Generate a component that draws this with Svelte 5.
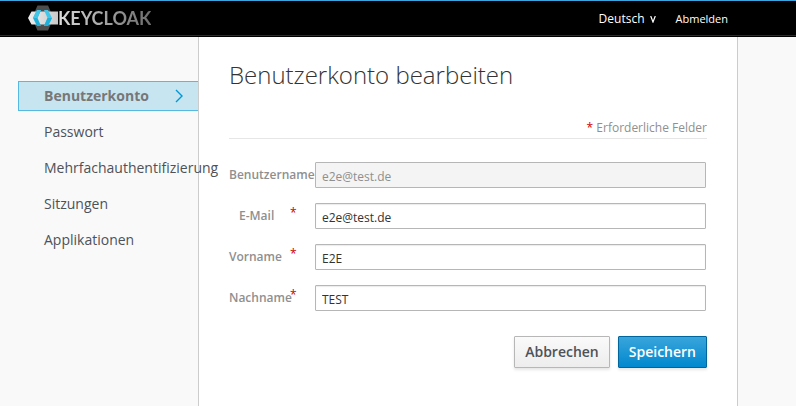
<script>
  const nav = ['Benutzerkonto', 'Passwort', 'Mehrfachauthentifizierung', 'Sitzungen', 'Applikationen'];
  const fields = [
    { id: 'username', label: 'Benutzername', value: 'e2e@test.de', disabled: true },
    { id: 'email', label: 'E-Mail', value: 'e2e@test.de', required: true, indent: true },
    { id: 'firstName', label: 'Vorname', value: 'E2E', required: true },
    { id: 'lastName', label: 'Nachname', value: 'TEST', required: true }
  ];
</script>

<div class="page">
  <header>
    <a class="logo" href="#home">
      <svg width="30" height="26" viewBox="0 0 30 26" aria-hidden="true">
        <defs>
          <linearGradient id="band" x1="0" x2="1" y1="0" y2="0">
            <stop offset="0" stop-color="#eeeeee" />
            <stop offset="1" stop-color="#c8c8c8" />
          </linearGradient>
        </defs>
        <path d="M9.500 0.500h10.500l5.500 12.500l-5.500 12.500h-10.500L4 13z" fill="#4d4d4d" />
        <path d="M3.500 6.500h26.500V19.500H3.500L0 13z" fill="url(#band)" />
        <path d="M9 5h4L9.500 13l3.500 8h-4L5 13z" fill="#1fb0da" />
        <path d="M9 5h4L9.500 13H5z" fill="#42c6e8" />
        <path d="M16 5h4L24 13l-4 8H16l3.500-8z" fill="#42c6e8" />
        <path d="M19.500 13h4.500l-4 8H16z" fill="#1fb0da" />
      </svg>
      <span>KEYCLOAK</span>
    </a>
    <nav class="tools">
      <a class="lang" href="#locale">Deutsch
        <svg width="6" height="7" viewBox="0 0 6 7" aria-hidden="true"><path d="M.7 0L3 6L5.300 0" fill="none" stroke="#fff" stroke-width="1.200" /></svg>
      </a>
      <a href="#logout">Abmelden</a>
    </nav>
  </header>

  <div class="body">
    <nav class="side">
      {#each nav as item, i}
        <a href="#{item}" class:active={i === 0}>
          {item}
          {#if i === 0}
            <svg width="9" height="14" viewBox="0 0 9 14" aria-hidden="true"><path d="M1 1l6 6l-6 6" fill="none" stroke="#0099d3" stroke-width="1.400" /></svg>
          {/if}
        </a>
      {/each}
    </nav>

    <main>
      <h1>Benutzerkonto bearbeiten</h1>
      <p class="hint"><span class="star">*</span> Erforderliche Felder</p>
      <form>
        {#each fields as f}
          <div class="row">
            <label for={f.id} class:indent={f.indent}>{f.label}</label>
            <span class="star">{f.required ? '*' : ''}</span>
            <input id={f.id} type="text" value={f.value} disabled={f.disabled} />
          </div>
        {/each}
        <div class="buttons">
          <button type="button">Abbrechen</button>
          <button type="submit" class="primary">Speichern</button>
        </div>
      </form>
    </main>
  </div>
</div>

<style>
  :global(body) { margin: 0; background: #f9f9f9; }
  .page {
    min-height: 100vh;
    display: flex;
    flex-direction: column;
    font: 12px/18px "Open Sans", sans-serif;
    color: #4d5258;
  }
  * { box-sizing: border-box; }
  a { text-decoration: none; color: inherit; }
  header {
    height: 37px;
    display: flex;
    align-items: center;
    justify-content: space-between;
    padding: 0 68px 0 28px;
    background: linear-gradient(#2c2c2c, #2c2c2c) 0 34px / 100% 1px no-repeat #000;
    border-top: 1px solid #39a5dc;
  }
  .logo { display: flex; align-items: center; padding-bottom: 2px; }
  .logo span {
    font: 700 18px/24px Lato, sans-serif;
    background: linear-gradient(90deg, #dcdcdc, #6c6c6c);
    background-clip: text;
    color: transparent;
  }
  .tools { display: flex; gap: 20px; color: #fff; font-size: 11px; }
  .lang { display: flex; align-items: center; gap: 5px; font-size: 12px; }
  .body { flex: 1; display: flex; padding: 0 58px 0 18px; }
  .side {
    width: 180px;
    flex: none;
    display: flex;
    flex-direction: column;
    gap: 6px;
    padding-top: 44px;
    font-size: 14px;
    z-index: 1;
  }
  .side a {
    height: 30px;
    display: flex;
    align-items: center;
    justify-content: space-between;
    padding: 0 14px 0 25px;
    border: 1px solid transparent;
    border-right: 0;
    white-space: nowrap;
  }
  .side .active {
    background: #c7e5f0;
    border-color: #56bae0;
    color: #777;
    font-weight: 700;
  }
  main {
    flex: 1;
    min-width: 0;
    padding: 22px 30px;
    background: #fff;
    border: solid #ccc;
    border-width: 0 1px;
  }
  h1 { margin: 0; font-size: 24px; line-height: 32px; font-weight: 300; color: #333; }
  .hint {
    margin: 28px 0 23px;
    padding-bottom: 1px;
    border-bottom: 1px solid #e6e6e6;
    text-align: right;
    color: #909090;
  }
  .star { color: #c00; }
  .row {
    display: grid;
    grid-template-columns: 61px 25px 1fr;
    margin: 0 1px 15px 0;
  }
  .row .star { line-height: 20px; }
  label {
    width: 0;
    line-height: 26px;
    font-weight: 600;
    color: #8f8f8f;
    white-space: nowrap;
  }
  .indent { padding-left: 10px; }
  input {
    width: 100%;
    height: 26px;
    padding: 2px 6px 0;
    border: 1px solid #b6b6b6;
    border-radius: 1px;
    box-shadow: inset 0 1px 1px rgba(0, 0, 0, .08);
    background: #fff;
    color: #333;
    font: 12px "Open Sans", sans-serif;
  }
  input:disabled { background: #f4f4f4; color: #8f8f8f; box-shadow: none; }
  .buttons { display: flex; justify-content: flex-end; gap: 8px; padding-top: 10px; }
  button {
    height: 32px;
    padding: 0 10px 2px;
    border: 1px solid #b7b7b7;
    border-radius: 1px;
    background: linear-gradient(#fafafa, #ededed);
    box-shadow: 0 2px 3px rgba(0, 0, 0, .1);
    color: #4d5258;
    font: 600 14px "Open Sans", sans-serif;
  }
  .primary {
    background: linear-gradient(#39a5dc, #0088ce);
    border-color: #00659c;
    color: #fff;
  }
</style>
